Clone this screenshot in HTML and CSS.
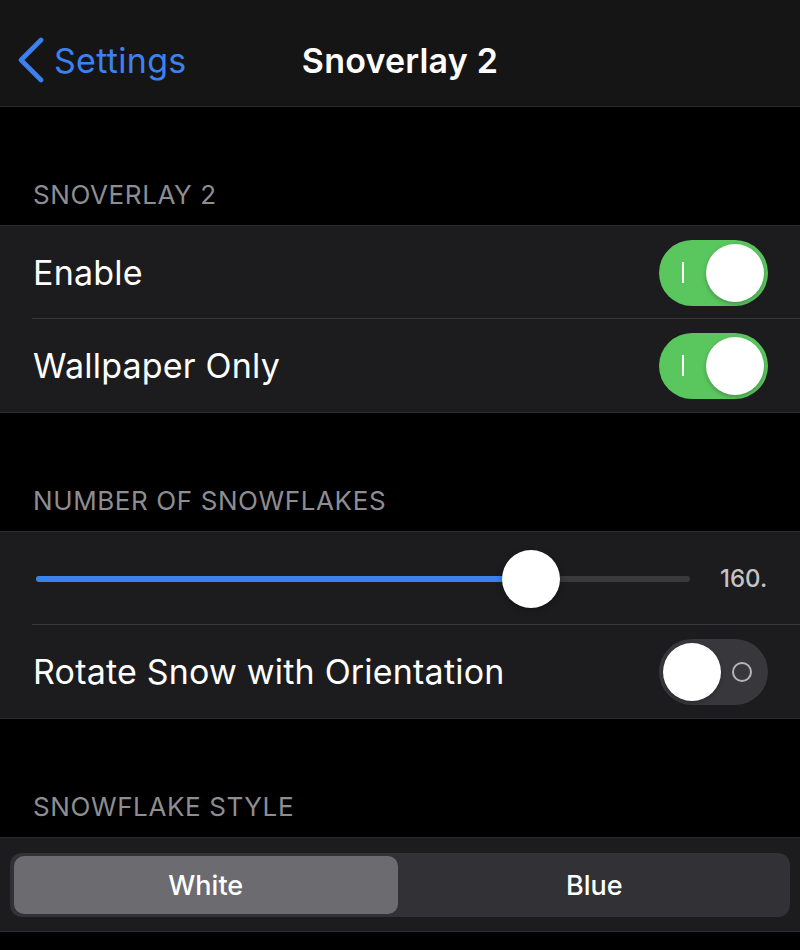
FILE: index.html
```html
<!DOCTYPE html>
<html lang="en">

<head>
    <meta charset="UTF-8" />
    <meta name="viewport" content="width=device-width, initial-scale=1.0" />
    <title>Snoverlay 2</title>
    <link rel="stylesheet" href="styles.css">
</head>

<body>
    <div class="navbar">
        <a class="back">
            <svg class="chevron" width="30" height="46" viewBox="0 0 30 46">
                <path d="M25 3 L5 23 L25 43" fill="none" stroke="#3b82f0" stroke-width="4.6" stroke-linecap="round" stroke-linejoin="round" />
            </svg>
            <span>Settings</span>
        </a>
        <div class="title">Snoverlay 2</div>
        <div></div>
    </div>

    <div class="section-header">SNOVERLAY 2</div>
    <ul class="group">
        <li class="row">
            <span class="label">Enable</span>
            <span class="switch on"><i class="mark"></i><i class="knob"></i></span>
        </li>
        <li class="row">
            <span class="label">Wallpaper Only</span>
            <span class="switch on"><i class="mark"></i><i class="knob"></i></span>
        </li>
    </ul>

    <div class="section-header">NUMBER OF SNOWFLAKES</div>
    <ul class="group">
        <li class="row slider-row">
            <div class="track">
                <div class="fill" style="width: 75.7%"></div>
                <div class="thumb" style="left: 75.7%"></div>
            </div>
            <span class="value">160.</span>
        </li>
        <li class="row">
            <span class="label">Rotate Snow with Orientation</span>
            <span class="switch off"><i class="knob"></i><i class="mark"></i></span>
        </li>
    </ul>

    <div class="section-header">SNOWFLAKE STYLE</div>
    <ul class="group">
        <li class="segment-row">
            <div class="segmented">
                <div class="segment selected">White</div>
                <div class="segment">Blue</div>
            </div>
        </li>
    </ul>
</body>

</html>
```

FILE: styles.css
```css
* {
    margin: 0;
    padding: 0;
    box-sizing: border-box;
}

body {
    width: 800px;
    height: 950px;
    background-color: #000;
    color: #fff;
    font-family: Inter, "Noto Sans", sans-serif;
    overflow: hidden;
}

/* 顶部导航 */
.navbar {
    height: 107px;
    background-color: #151515;
    border-bottom: 1px solid #2a2a2c;
    display: grid;
    grid-template-columns: 1fr auto 1fr;
    align-items: center;
    padding-top: 14px;
}

.back {
    display: flex;
    align-items: center;
    padding-left: 16px;
    color: #3b82f0;
    font-size: 34px;
    letter-spacing: 0.3px;
}

.back span {
    margin-left: 8px;
}

.title {
    font-size: 34px;
    font-weight: 600;
    letter-spacing: 0.2px;
}

.section-header {
    height: 118px;
    display: flex;
    align-items: flex-end;
    padding: 0 33px 15px;
    font-size: 26px;
    line-height: 30px;
    color: #8d8d92;
    letter-spacing: 0.6px;
}

.group {
    list-style-type: none;
    background-color: #1c1c1e;
    border-top: 1px solid #2c2c2e;
    border-bottom: 1px solid #2c2c2e;
}

.row {
    height: 93px;
    display: flex;
    align-items: center;
    justify-content: space-between;
    padding: 0 32px 0 33px;
    position: relative;
}

.row + .row::before {
    content: "";
    position: absolute;
    top: -1px;
    left: 32px;
    right: 0;
    height: 1px;
    background-color: #38383a;
}

.label {
    font-size: 34px;
    letter-spacing: 0.2px;
}

/* 开关 */
.switch {
    width: 109px;
    height: 66px;
    border-radius: 33px;
    display: flex;
    align-items: center;
    padding: 0 4px;
}

.switch.on {
    background-color: #5ac65e;
    justify-content: space-between;
    padding-left: 23px;
}

.switch.off {
    background-color: #38383c;
    justify-content: space-between;
    padding-right: 16px;
}

.knob {
    width: 58px;
    height: 58px;
    border-radius: 50%;
    background-color: #fff;
    box-shadow: 0 2px 4px rgba(0, 0, 0, 0.25);
}

.switch.on .mark {
    width: 2px;
    height: 21px;
    background-color: #fff;
}

.switch.off .mark {
    width: 20px;
    height: 20px;
    border: 2px solid #b5b5b8;
    border-radius: 50%;
}

/* 滑块 */
.slider-row {
    padding: 0 16px 0 36px;
    gap: 30px;
}

.track {
    flex: 1;
    height: 6px;
    border-radius: 3px;
    background-color: #3a3a3c;
    position: relative;
}

.fill {
    height: 100%;
    border-radius: 3px;
    background-color: #3b82f0;
}

.thumb {
    position: absolute;
    top: 50%;
    width: 58px;
    height: 58px;
    border-radius: 50%;
    background-color: #fff;
    transform: translate(-50%, -50%);
    box-shadow: 0 2px 6px rgba(0, 0, 0, 0.3);
}

.value {
    width: 64px;
    font-size: 24px;
    font-weight: 500;
    color: #c4c4c6;
}

/* 分段控件 */
.segment-row {
    height: 93px;
    padding: 15px 10px 14px;
}

.segmented {
    height: 64px;
    border-radius: 12px;
    background-color: #313136;
    display: flex;
    padding: 3px 4px;
}

.segment {
    flex: 1;
    display: flex;
    align-items: center;
    justify-content: center;
    font-size: 27px;
    font-weight: 500;
    border-radius: 10px;
}

.segment.selected {
    background-color: #6b6b70;
    margin-right: 5px;
}
```
